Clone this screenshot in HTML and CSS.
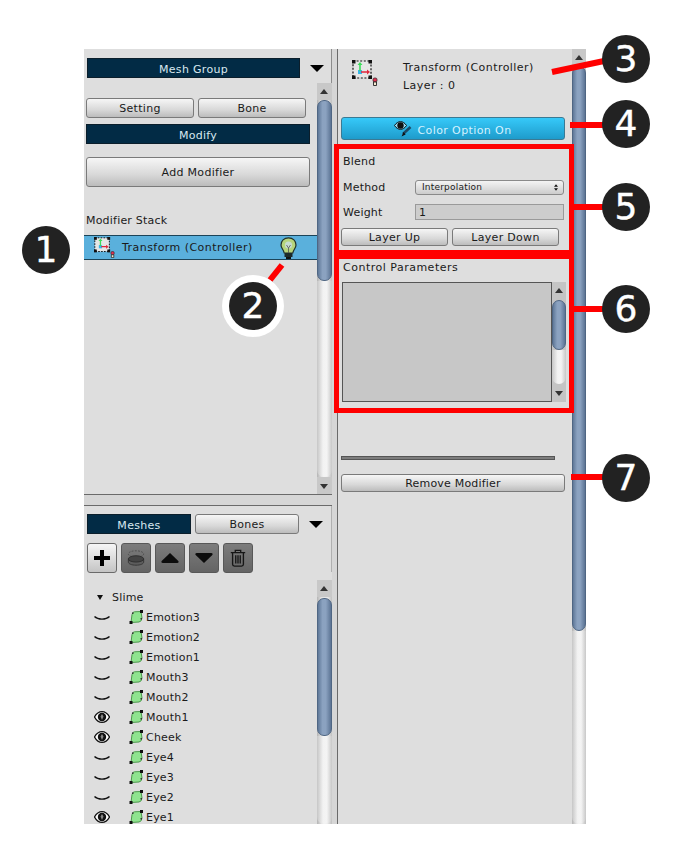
FILE: index.html
```html
<!DOCTYPE html>
<html>
  <head>
    <title>Modifier Stack</title>
    <link rel="stylesheet" href="styles.css">
  </head>
  <body>
    <svg class="defs" width="0" height="0">
      <defs>
        <symbol id="mesh" viewBox="0 0 14 14">
          <path d="M2 12.500 L3 4.500 Q3.300 2 5.500 1.800 L12 1.500 L13 8 Q12.800 11.500 10 12 Z" fill="#8fe48f" stroke="#3f8f3f" stroke-width="0.9"/>
          <rect x="11" y="0" width="3" height="3" fill="#111"/>
          <rect x="0.5" y="11" width="3" height="3" fill="#111"/>
          <rect x="3" y="2.5" width="1.5" height="1.5" fill="#333"/>
          <rect x="11.500" y="8" width="1.5" height="1.5" fill="#333"/>
        </symbol>
        <symbol id="eye-open" viewBox="0 0 16 12">
          <path d="M0.5 6 C3 1.5 5.5 0.7 8 0.7 C10.5 0.7 13 1.5 15.5 6 C13 10.5 10.5 11.3 8 11.3 C5.5 11.3 3 10.5 0.5 6 Z" fill="#fff" stroke="#111" stroke-width="1.3"/>
          <circle cx="8" cy="6" r="4.2" fill="#111"/>
          <path d="M8 3 L9.5 5.5 L8 9 L6.5 5.5 Z" fill="#888"/>
        </symbol>
        <symbol id="eye-closed" viewBox="0 0 16 12">
          <path d="M0.5 5.500 C4 9 12 9 15.5 5.500" fill="none" stroke="#111" stroke-width="1.4"/>
        </symbol>
        <symbol id="transform" viewBox="0 0 26 26">
          <rect x="1" y="1" width="18" height="17" fill="#e6e6e6" stroke="#111" stroke-width="1.2" stroke-dasharray="2 1.6"/>
          <rect x="0" y="0" width="3.500" height="3.500" fill="#111"/>
          <rect x="16.500" y="0" width="3.500" height="3.500" fill="#111"/>
          <rect x="0" y="15.500" width="3.500" height="3.500" fill="#111"/>
          <rect x="16.500" y="15.500" width="3.500" height="3.500" fill="#111"/>
          <rect x="6" y="10" width="4" height="4" fill="#36b6e8"/>
          <path d="M7.2 11 V5 H5.5 L8 2 L10.5 5 H8.8 V11 Z" fill="#3ddc5c"/>
          <path d="M9 11.2 H15 V9.5 L18 12 L15 14.5 V12.8 H9 Z" fill="#e0283c"/>
          <rect x="21" y="18" width="4" height="4" rx="1.5" fill="#e03050" stroke="#222" stroke-width="0.7"/>
          <path d="M21.5 22 H24.5 V25.5 H21.5 Z" fill="#f4e8d0" stroke="#222" stroke-width="0.9"/>
        </symbol>
        <symbol id="bulb" viewBox="0 0 17 22">
          <path d="M8.5 0.8 C13 0.8 16 3.8 16 8 C16 11 13.5 12.5 12.8 16 H4.2 C3.5 12.5 1 11 1 8 C1 3.8 4 0.8 8.5 0.8 Z" fill="#b6d47c" stroke="#20302a" stroke-width="1.2"/>
          <circle cx="8.5" cy="8" r="3.6" fill="#c6dcd0"/>
          <path d="M6.5 8 L8.5 11 L10.5 8 M8.5 11 V16" fill="none" stroke="#555" stroke-width="0.8"/>
          <rect x="4.5" y="16" width="8" height="4" fill="#1c2a2a"/>
          <rect x="6" y="20" width="5" height="2" fill="#111"/>
        </symbol>
        <symbol id="color-eye" viewBox="0 0 18 16">
          <path d="M0.5 4.5 C2.5 1.5 4.5 0.7 6.5 0.7 C8.5 0.7 10.5 1.5 12.5 4.5 C10.5 7.5 8.5 8.3 6.5 8.3 C4.5 8.3 2.5 7.5 0.5 4.5 Z" fill="#9adcf4" stroke="#111" stroke-width="1"/>
          <circle cx="6.5" cy="4.5" r="3.2" fill="#111"/>
          <path d="M16.5 6 L9 13" stroke="#1c4a66" stroke-width="2.6"/>
          <path d="M9.6 11 L7.5 15.5 L11.6 13.6 Z" fill="#111"/>
        </symbol>
      </defs>
    </svg>

    <div class="app">
      <div class="left">
        <div class="left-top">
          <div class="head-row">
            <div class="tab tab-wide">Mesh Group</div>
            <span class="drop"></span>
          </div>
          <div class="split">
            <div class="left-main">
              <div class="btn-row">
                <button class="btn half">Setting</button>
                <button class="btn half">Bone</button>
              </div>
              <div class="tab tab-modify">Modify</div>
              <button class="btn add">Add Modifier</button>
              <div class="stack-title">Modifier Stack</div>
              <div class="stack-row">
                <svg class="stack-icon"><use href="#transform"/></svg>
                <span class="stack-name">Transform (Controller)</span>
                <svg class="bulb"><use href="#bulb"/></svg>
              </div>
            </div>
            <div class="scroll">
              <span class="arrow up"></span>
              <div class="thumb thumb-stack"></div>
              <div class="rest"></div>
              <span class="arrow down"></span>
            </div>
          </div>
        </div>

        <div class="left-bottom">
          <div class="tabs-row">
            <div class="tab tab-meshes">Meshes</div>
            <button class="btn tab-bones">Bones</button>
            <span class="drop"></span>
          </div>
          <div class="tools">
            <button class="tool on">
              <svg viewBox="0 0 18 18"><path d="M7 1 H11 V7 H17 V11 H11 V17 H7 V11 H1 V7 H7 Z" fill="#000"/></svg>
            </button>
            <button class="tool">
              <svg viewBox="0 0 20 18"><ellipse cx="10" cy="4.5" rx="8.5" ry="3.5" fill="none" stroke="#4a4a4a" stroke-dasharray="2 1.5"/><path d="M1.5 10 V13.5 C1.5 15.500 5 17 10 17 C15 17 18.500 15.500 18.500 13.500 V10" fill="#5c5c5c" stroke="#333"/><ellipse cx="10" cy="10" rx="8.5" ry="3.500" fill="#444" stroke="#2c2c2c"/></svg>
            </button>
            <button class="tool">
              <svg viewBox="0 0 22 14"><path d="M11 1 L21.5 11 Q22 13 20 13 H2 Q0 13 0.5 11 Z" fill="#0c0c0c"/></svg>
            </button>
            <button class="tool">
              <svg viewBox="0 0 22 14"><path d="M11 13 L21.5 3 Q22 1 20 1 H2 Q0 1 0.5 3 Z" fill="#0c0c0c"/></svg>
            </button>
            <button class="tool">
              <svg viewBox="0 0 18 20"><path d="M1 4 H17 M6 4 V1.500 H12 V4 M3 4 V17 Q3 19 5 19 H13 Q15 19 15 17 V4 M6.500 7 V16 M9 7 V16 M11.500 7 V16" fill="none" stroke="#161616" stroke-width="1.500"/></svg>
            </button>
          </div>
          <div class="split">
            <div class="tree">
              <div class="tree-root"><span class="fold"></span>Slime</div>
              <div class="tree-row"><svg class="eye"><use href="#eye-closed"/></svg><svg class="mesh"><use href="#mesh"/></svg>Emotion3</div>
              <div class="tree-row"><svg class="eye"><use href="#eye-closed"/></svg><svg class="mesh"><use href="#mesh"/></svg>Emotion2</div>
              <div class="tree-row"><svg class="eye"><use href="#eye-closed"/></svg><svg class="mesh"><use href="#mesh"/></svg>Emotion1</div>
              <div class="tree-row"><svg class="eye"><use href="#eye-closed"/></svg><svg class="mesh"><use href="#mesh"/></svg>Mouth3</div>
              <div class="tree-row"><svg class="eye"><use href="#eye-closed"/></svg><svg class="mesh"><use href="#mesh"/></svg>Mouth2</div>
              <div class="tree-row"><svg class="eye"><use href="#eye-open"/></svg><svg class="mesh"><use href="#mesh"/></svg>Mouth1</div>
              <div class="tree-row"><svg class="eye"><use href="#eye-open"/></svg><svg class="mesh"><use href="#mesh"/></svg>Cheek</div>
              <div class="tree-row"><svg class="eye"><use href="#eye-closed"/></svg><svg class="mesh"><use href="#mesh"/></svg>Eye4</div>
              <div class="tree-row"><svg class="eye"><use href="#eye-closed"/></svg><svg class="mesh"><use href="#mesh"/></svg>Eye3</div>
              <div class="tree-row"><svg class="eye"><use href="#eye-closed"/></svg><svg class="mesh"><use href="#mesh"/></svg>Eye2</div>
              <div class="tree-row"><svg class="eye"><use href="#eye-open"/></svg><svg class="mesh"><use href="#mesh"/></svg>Eye1</div>
            </div>
            <div class="scroll">
              <span class="arrow up"></span>
              <div class="thumb thumb-tree"></div>
              <div class="rest"></div>
            </div>
          </div>
        </div>
      </div>

      <div class="right">
        <div class="right-main">
          <div class="info">
            <svg class="info-icon"><use href="#transform"/></svg>
            <div class="info-text">
              <div>Transform (Controller)</div>
              <div>Layer : 0</div>
            </div>
          </div>
          <button class="color-btn">
            <svg class="color-icon"><use href="#color-eye"/></svg>Color Option On
          </button>
          <div class="blend">
            <div class="blend-title">Blend</div>
            <div class="field">
              <label>Method</label>
              <div class="select">Interpolation
                <svg viewBox="0 0 6 10"><path d="M3 0 L6 4 H0 Z M3 10 L0 6 H6 Z" fill="#111"/></svg>
              </div>
            </div>
            <div class="field field-weight">
              <label>Weight</label>
              <div class="input">1</div>
            </div>
            <div class="layer-btns">
              <button class="btn layer">Layer Up</button>
              <button class="btn layer">Layer Down</button>
            </div>
          </div>
          <div class="params-title">Control Parameters</div>
          <div class="params">
            <div class="params-box"></div>
            <div class="scroll scroll-params">
              <span class="arrow up"></span>
              <div class="thumb thumb-params"></div>
              <div class="rest rest-params"></div>
              <span class="arrow down"></span>
            </div>
          </div>
          <div class="slider"></div>
          <button class="btn remove">Remove Modifier</button>
        </div>
        <div class="scroll scroll-right">
          <span class="arrow up"></span>
          <div class="thumb thumb-right"></div>
          <div class="rest"></div>
        </div>
      </div>
    </div>

    <!-- annotations on top of the screenshot -->
    <div class="redbox box-blend"></div>
    <div class="redbox box-params"></div>
    <svg class="leaders" width="681" height="851">
      <g stroke="#f00" stroke-width="6">
        <path d="M552 72 L604 61"/>
        <path d="M570 125 H604"/>
        <path d="M574 207 H604"/>
        <path d="M574 309 H604"/>
        <path d="M571 477 H604"/>
        <path d="M270 280 L282 265"/>
      </g>
    </svg>
    <div class="callout c1">1</div>
    <div class="callout c2">2</div>
    <div class="callout c3">3</div>
    <div class="callout c4">4</div>
    <div class="callout c5">5</div>
    <div class="callout c6">6</div>
    <div class="callout c7">7</div>
  </body>
</html>
```

FILE: styles.css
```css
* {
  box-sizing: border-box;
}
html,
body {
  margin: 0;
  height: 851px;
  overflow: hidden;
}
body {
  position: relative;
  background: #fff;
  color: #1a1a1a;
  font-family: "DejaVu Sans", sans-serif;
  font-size: 11px;
}
button {
  font-family: inherit;
  font-size: 11px;
  color: #1a1a1a;
  padding: 0;
}
.defs {
  position: absolute;
}

.app {
  display: flex;
  width: 502px;
  height: 775px;
  margin: 49px 0 0 84px;
  background: #dedede;
}
.left {
  display: flex;
  flex-direction: column;
  width: 254px;
  border-right: 1px solid #6a6a6a;
  background: #d6d6d6;
}
.left-top {
  display: flex;
  flex-direction: column;
  height: 446px;
  width: 248px;
  background: #dedede;
  border-bottom: 1px solid #6a6a6a;
}
.left-bottom {
  display: flex;
  flex-direction: column;
  flex: 1;
  width: 248px;
  margin-top: 10px;
  background: #dedede;
  border-top: 1px solid #6a6a6a;
  overflow: hidden;
}
.head-row {
  display: flex;
  align-items: center;
  height: 34px;
  padding: 9px 0 5px 3px;
  box-shadow: inset -1px 0 0 #8c8c8c;
}
.split {
  display: flex;
  flex: 1;
  min-height: 0;
}
.left-main {
  flex: 1;
  padding: 15px 0 0;
}

.tab {
  display: flex;
  align-items: center;
  justify-content: center;
  height: 20px;
  padding-top: 2px;
  background: #022b45;
  border: 1px solid #0b1e2b;
  color: #d8e8f0;
  letter-spacing: 0.3px;
}
.tab-wide {
  width: 213px;
}
.tab-modify {
  width: 224px;
  margin: 6px 0 0 2px;
}
.tab-meshes {
  width: 104px;
}
.drop {
  width: 0;
  height: 0;
  margin-left: 10px;
  border-style: solid;
  border-width: 7px 7px 0;
  border-color: #000 transparent transparent;
}

.btn {
  display: block;
  height: 20px;
  background: linear-gradient(#f6f6f6, #d8d8d8 60%, #bcbcbc);
  border: 1px solid #7a7a7a;
  border-radius: 3px;
  letter-spacing: 0.3px;
}
.btn-row {
  display: flex;
  gap: 4px;
  padding-left: 2px;
}
.half {
  width: 108px;
}
.add {
  width: 224px;
  height: 30px;
  margin: 13px 0 0 2px;
}
.stack-title {
  margin: 27px 0 0 2px;
  height: 14px;
  line-height: 14px;
  letter-spacing: 0.2px;
}
.stack-row {
  display: flex;
  align-items: center;
  height: 25px;
  margin-top: 7px;
  padding-left: 10px;
  background: #5ab0dc;
  border-top: 1px solid #1c4458;
  border-bottom: 1px solid #1c4458;
}
.stack-icon {
  width: 21px;
  height: 21px;
}
.stack-name {
  margin-left: 7px;
  letter-spacing: 0.45px;
}
.bulb {
  width: 17px;
  height: 22px;
  margin-left: 27px;
}

.scroll {
  display: flex;
  flex-direction: column;
  flex: none;
  width: 15px;
  background: linear-gradient(to right, #b4b4b4, #e2e2e2 30%, #e8e8e8 70%, #c0c0c0);
}
.arrow {
  flex: none;
  height: 17px;
  position: relative;
  background: #c8c8c8;
}
.arrow::after {
  content: "";
  position: absolute;
  left: 3px;
  width: 0;
  height: 0;
  border-style: solid;
  border-color: transparent;
}
.arrow.up::after {
  top: 6px;
  border-width: 0 4px 5px;
  border-bottom-color: #333;
}
.arrow.down::after {
  top: 7px;
  border-width: 5px 4px 0;
  border-top-color: #333;
}
.thumb {
  flex: none;
  background: linear-gradient(to right, #5f7898, #8ba2c0 35%, #8ba2c0 60%, #5c7494);
  border: 1px solid #4f6683;
  border-radius: 7px;
}
.rest {
  flex: 1;
  border-radius: 0 0 7px 7px;
  background: linear-gradient(to right, #c6c6c6, #f2f2f2 40%, #f4f4f4 65%, #c8c8c8);
}
.thumb-stack {
  height: 181px;
}

.tabs-row {
  display: flex;
  align-items: center;
  height: 28px;
  padding: 8px 0 0 3px;
  flex: none;
  box-shadow: inset -1px 0 0 #b0b0b0;
}
.tab-bones {
  width: 104px;
  margin-left: 4px;
}
.tools {
  display: flex;
  flex: none;
  gap: 4px;
  height: 38px;
  padding: 9px 0 0 3px;
  box-shadow: inset -1px 0 0 #b0b0b0;
}
.tool {
  display: flex;
  align-items: center;
  justify-content: center;
  width: 30px;
  height: 30px;
  background: linear-gradient(#7c7c7c, #646464);
  border: 1px solid #585858;
  border-radius: 3px;
}
.tool.on {
  background: linear-gradient(#f6f6f6, #c4c4c4);
  border-color: #6a6a6a;
}
.tool svg {
  width: 18px;
  height: 18px;
}
.left-bottom .split {
  margin-top: 8px;
}
.tree {
  flex: 1;
  padding-top: 7px;
  overflow: hidden;
  letter-spacing: 0.2px;
}
.tree-root,
.tree-row {
  display: flex;
  align-items: center;
  height: 20px;
}
.tree-root {
  padding-left: 13px;
}
.fold {
  width: 0;
  height: 0;
  margin-right: 9px;
  border-style: solid;
  border-width: 5px 3px 0;
  border-color: #111 transparent transparent;
}
.tree-row {
  padding-left: 10px;
}
.eye {
  width: 16px;
  height: 12px;
  flex: none;
}
.mesh {
  width: 14px;
  height: 14px;
  flex: none;
  margin: 0 3px 0 19px;
}
.thumb-tree {
  height: 138px;
  margin-top: 1px;
}

.right {
  display: flex;
  flex: 1;
}
.right-main {
  flex: 1;
  padding-left: 3px;
}
.info {
  display: flex;
  height: 68px;
  padding: 11px 0 0 11px;
}
.info-icon {
  width: 26px;
  height: 26px;
}
.info-text {
  margin: -1px 0 0 25px;
  line-height: 18px;
  letter-spacing: 0.45px;
}
.color-btn {
  display: flex;
  align-items: center;
  justify-content: center;
  width: 224px;
  height: 23px;
  padding-top: 3px;
  background: linear-gradient(#36c9f9, #1e9bcb);
  border: 1px solid #3a7a94;
  border-radius: 3px;
  color: #d4f2ff;
  letter-spacing: 0.4px;
}
.color-icon {
  width: 18px;
  height: 16px;
  margin: -3px 5px 0 0;
}
.blend {
  height: 117px;
  padding: 15px 0 0 2px;
}
.blend-title {
  height: 14px;
  line-height: 14px;
  letter-spacing: 0.2px;
}
.field {
  display: flex;
  align-items: center;
  height: 16px;
  margin-top: 10px;
  letter-spacing: 0.2px;
}
.field label {
  width: 72px;
}
.select {
  display: flex;
  align-items: center;
  justify-content: space-between;
  width: 149px;
  height: 15px;
  padding: 0 5px 0 6px;
  font-size: 9px;
  letter-spacing: 0.2px;
  background: linear-gradient(#f4f4f4, #cccccc);
  border: 1px solid #8a8a8a;
  border-radius: 3px;
}
.select svg {
  width: 4px;
  height: 7px;
}
.field-weight {
  margin-top: 9px;
}
.input {
  width: 149px;
  height: 16px;
  line-height: 15px;
  padding-left: 3px;
  background: #cdcdcd;
  border: 1px solid #9a9a9a;
}
.layer-btns {
  display: flex;
  gap: 4px;
  margin: 8px 0 0 -2px;
}
.layer {
  width: 107px;
  height: 18px;
}
.params-title {
  height: 14px;
  line-height: 14px;
  margin: 4px 0 0 2px;
  letter-spacing: 0.5px;
}
.params {
  display: flex;
  height: 120px;
  margin: 7px 0 0 1px;
}
.params-box {
  width: 210px;
  background: #c7c7c7;
  border: 1px solid #555;
}
.scroll-params {
  width: 14px;
  background: #c4c4c4;
}
.scroll-params .arrow {
  height: 18px;
  background: transparent;
}
.thumb-params {
  height: 50px;
}
.rest-params {
  border-radius: 0 0 8px 8px;
}
.slider {
  width: 214px;
  height: 4px;
  margin-top: 54px;
  background: #7d7d7d;
  border: 1px solid #555;
}
.remove {
  width: 224px;
  height: 18px;
  margin-top: 14px;
  letter-spacing: 0.2px;
}
.scroll-right {
  width: 14px;
}
.thumb-right {
  height: 565px;
}

/* annotations */
.redbox {
  position: absolute;
  left: 334px;
  width: 240px;
  border: 5px solid #f00;
}
.box-blend {
  top: 144px;
  height: 111px;
}
.box-params {
  top: 254px;
  height: 159px;
}
.leaders {
  position: absolute;
  left: 0;
  top: 0;
}
.callout {
  position: absolute;
  width: 48px;
  height: 48px;
  border-radius: 50%;
  background: #222;
  color: #fff;
  font-family: "DejaVu Sans", sans-serif;
  font-size: 36px;
  line-height: 48px;
  text-align: center;
  -webkit-text-stroke: 0.4px #fff;
}
.c1 {
  left: 22px;
  top: 226px;
}
.c2 {
  left: 229px;
  top: 282px;
  box-shadow: 0 0 0 7px #fff;
}
.c3 {
  left: 602px;
  top: 35px;
}
.c4 {
  left: 602px;
  top: 100px;
}
.c5 {
  left: 602px;
  top: 183px;
}
.c6 {
  left: 602px;
  top: 285px;
}
.c7 {
  left: 602px;
  top: 454px;
}
```
